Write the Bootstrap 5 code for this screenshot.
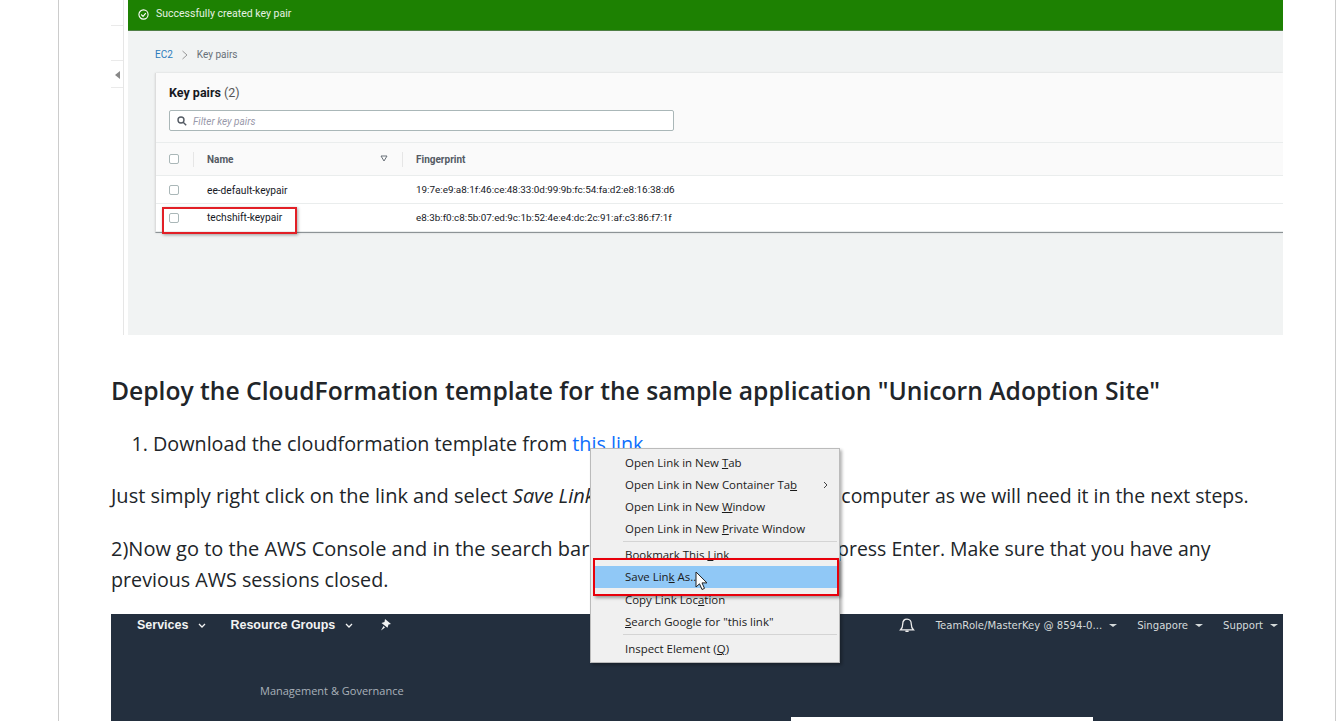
<!DOCTYPE html>
<html lang="en">
<head>
  <meta charset="UTF-8">
  <title>Deploy the CloudFormation template</title>
  <link href="https://cdn.jsdelivr.net/npm/bootstrap@5.3.0/dist/css/bootstrap.min.css" rel="stylesheet">
  <style>
    html, body { height: 721px; overflow: hidden; }
    body { background: #fff; color: #212529; font-family: "Open Sans", sans-serif; }
    .page-frame { position: relative; width: 1278px; height: 721px; margin-left: 58px; padding-left: 52px; padding-right: 52px; border-left: 1px solid #ccc; border-right: 1px solid #ccc; overflow: hidden; }

    /* first screenshot */
    .shot-one { height: 335px; display: flex; overflow: hidden; font-family: Roboto, sans-serif; }
    .side-strip { position: relative; width: 13px; flex: none; border-right: 1px solid #e6e6e6; }
    .side-line { height: 1px; background: #eaeaea; margin-top: 25px; }
    .side-line.second { margin-top: 34px; }
    .side-line.third { margin-top: 26px; }
    .side-arrow { position: absolute; left: 4px; top: 71px; width: 0; height: 0; border-style: solid; border-width: 4px 5px 4px 0; border-color: transparent #888 transparent transparent; }
    .console { flex: 1; margin-left: 4px; background: #f1f3f3; min-width: 0; }
    .flash-bar { height: 31px; background: #1d8102; border-bottom: 1px solid #4f7f45; color: #e6f2e2; font-size: 10.5px; padding-left: 10px; padding-bottom: 2px; gap: 7px; }
    .crumbs { height: 42px; padding-left: 27px; padding-top: 5px; gap: 8px; font-size: 10px; color: #687078; }
    .crumbs a { color: #2c7cbd; text-decoration: none; }
    .keys-panel { position: relative; margin-left: 27px; background: #fafafa; border: 0; border-left: 1px solid #ddd; border-radius: 0; border-bottom: 1px solid #8d9396; height: 160px; box-shadow: 0 0 2px rgba(0,0,0,.12); }
    .keys-title { font-size: 12.5px; font-weight: 700; color: #16191f; padding: 11px 0 0 13px; height: 37px; }
    .keys-title span { font-weight: 400; color: #555; }
    .keys-filter { width: 505px; height: 21px; margin-left: 13px; background: #fff; border: 1px solid #aab7b8; border-radius: 2px; padding-left: 7px; padding-top: 2px; gap: 6px; font-size: 10px; font-style: italic; color: #99a; }
    .keys-head { height: 35px; margin-top: 11px; border-top: 1px solid #eaeded; border-bottom: 1px solid #eaeded; font-size: 10px; font-weight: 700; color: #545b64; }
    .keys-row { height: 28px; background: #fff; border-bottom: 1px solid #eaeded; font-size: 9.9px; color: #16191f; }
    .keys-row:last-child { border-bottom: 0; }
    .tick-cell { width: 37px; flex: none; padding-left: 13px; }
    .tick { display: block; width: 10px; height: 10px; border: 1px solid #aab7b8; border-radius: 2px; background: #fff; }
    .name-cell { width: 209px; flex: none; padding-left: 14px; }
    .keys-row .name-cell { font-size: 10.2px; padding-top: 1px; }
    .print-cell { padding-left: 14px; }
    .keys-row .print-cell { padding-top: 1px; }
    .keys-head .name-cell { position: relative; border-left: 1px solid #e6e6e6; height: 15px; line-height: 15px; padding-left: 13px; }
    .keys-head .print-cell { border-left: 1px solid #e6e6e6; height: 15px; line-height: 15px; padding-left: 13px; }
    .sort-mark { position: absolute; right: 14px; top: 3px; }
    .red-box { position: absolute; left: 6px; top: 134px; width: 135px; height: 27px; border: 2px solid #e21f26; box-shadow: 1px 1px 3px rgba(0,0,0,.35); }

    /* article text */
    .doc-title { font-family: "Open Sans", sans-serif; font-size: 24.65px; font-weight: 600; color: #212529; margin: 40px 0 0; line-height: 32px; }
    .doc-list { font-size: 19.75px; line-height: 31px; margin: 21px 0 0; padding-left: 42px; }
    .doc-list a { color: #0d6efd; text-decoration: none; }
    .doc-para { font-size: 19.7px; line-height: 31px; margin: 21px 0 0; }
    .doc-para + .doc-para { margin-top: 22px; }
    .run-wide { font-size: 20px; }
    .run-tight { font-size: 19.45px; }

    /* second screenshot */
    .shot-two { position: relative; height: 200px; margin-top: 19px; background: #232f3e; font-family: "DejaVu Sans", sans-serif; color: #d5dbdb; }
    .aws-bar { height: 22px; padding: 0 5px 0 26px; font-size: 10.1px; }
    .aws-left { gap: 24px; font-family: "Liberation Sans", sans-serif; font-weight: 700; font-size: 12.5px; color: #f2f3f3; }
    .aws-left .aws-item { gap: 10px; }
    .aws-left .pin-mark { margin-left: 3px; }
    .aws-right { gap: 20px; padding-top: 2px; }
    .aws-right .bell-mark { margin-right: 1px; margin-top: -2px; }
    .aws-item { gap: 7px; }
    .caret-down { display: inline-block; width: 0; height: 0; border-style: solid; border-width: 3px 4px 0 4px; border-color: #d5dbdb transparent transparent transparent; }
    .chev-down { width: 8px; height: 5px; }
    .aws-group { font-family: "Open Sans", sans-serif; font-size: 11px; color: #a9b1ba; padding: 47px 0 0 149px; }
    .aws-white { position: absolute; left: 680px; top: 103px; width: 302px; height: 20px; background: #fff; }

    /* browser context menu */
    .link-menu { position: absolute; left: 531px; top: 448px; width: 250px; height: 215px; margin: 0; padding: 3px 2px; background: #f0f0f0; border: 1px solid #bbb; border-radius: 0; box-shadow: 2px 2px 3px rgba(0,0,0,.3); font-family: "Open Sans", sans-serif; color: #1a1a1a; min-width: 0; }
    .link-menu .dropdown-item { position: relative; height: 22px; line-height: 21px; padding: 0 0 0 32px; color: #1a1a1a; font-size: 11.45px; }
    .link-menu .dropdown-item.picked { background: #90c8f6; margin-bottom: 1px; }
    .link-menu .dropdown-divider { margin: 1px 0 2px 30px; border-top: 1px solid #d4d4d4; opacity: 1; height: 1px; }
    .link-menu .dropdown-divider.lower { margin-bottom: 3px; }
    .sub-arrow { position: absolute; right: 9px; top: 7px; }
    .menu-red { position: absolute; z-index: 1001; left: 534px; top: 558px; width: 246px; height: 38px; border: 2px solid #e8000b; box-shadow: 2px 2px 3px rgba(0,0,0,.35); }
    .mouse-arrow { position: absolute; z-index: 1002; left: 636px; top: 571px; }
  </style>
</head>
<body>
  <div class="page-frame">
    <div class="shot-one">
      <div class="side-strip">
        <div class="side-line"></div>
        <div class="side-line second"></div>
        <div class="side-line third"></div>
        <span class="side-arrow"></span>
      </div>
      <div class="console">
        <div class="flash-bar d-flex align-items-center">
          <svg width="11" height="11" viewBox="0 0 12 12" fill="none" stroke="#fff" stroke-width="1.2"><circle cx="6" cy="6" r="5"/><path d="M3.500 6l2 2 3-3.600"/></svg>
          <span>Successfully created key pair</span>
        </div>
        <div class="crumbs d-flex align-items-center">
          <a href="#">EC2</a>
          <svg width="8" height="10" viewBox="0 0 8 10" fill="none" stroke="#999" stroke-width="1"><path d="M1.500 1l4.500 4-4.500 4"/></svg>
          <span>Key pairs</span>
        </div>
        <div class="card keys-panel">
          <div class="keys-title">Key pairs <span>(2)</span></div>
          <div class="keys-filter d-flex align-items-center">
            <svg width="10" height="10" viewBox="0 0 10 10" fill="none" stroke="#545b64" stroke-width="1.400"><circle cx="4" cy="4" r="3"/><path d="M6.200 6.200L9.200 9.200"/></svg>
            <span>Filter key pairs</span>
          </div>
          <div class="keys-head d-flex align-items-center">
            <div class="tick-cell"><span class="tick"></span></div>
            <div class="name-cell">Name
              <svg class="sort-mark" width="8" height="7" viewBox="0 0 8 7" fill="none" stroke="#687078"><path d="M1 1h6L4 6z"/></svg>
            </div>
            <div class="print-cell">Fingerprint</div>
          </div>
          <div class="keys-row d-flex align-items-center">
            <div class="tick-cell"><span class="tick"></span></div>
            <div class="name-cell">ee-default-keypair</div>
            <div class="print-cell">19:7e:e9:a8:1f:46:ce:48:33:0d:99:9b:fc:54:fa:d2:e8:16:38:d6</div>
          </div>
          <div class="keys-row d-flex align-items-center">
            <div class="tick-cell"><span class="tick"></span></div>
            <div class="name-cell">techshift-keypair</div>
            <div class="print-cell">e8:3b:f0:c8:5b:07:ed:9c:1b:52:4e:e4:dc:2c:91:af:c3:86:f7:1f</div>
          </div>
          <div class="red-box"></div>
        </div>
      </div>
    </div>

    <h4 class="doc-title">Deploy the CloudFormation template for the sample application "Unicorn Adoption Site"</h4>
    <ol class="doc-list">
      <li>Download the cloudformation template from <a href="#">this link</a></li>
    </ol>
    <p class="doc-para"><span class="run-wide">Just simply right click on the link and select <em>Save Link As...</em> and save it onto your</span> <span class="run-tight">computer as we will need it in the next steps.</span></p>
    <p class="doc-para"><span class="run-wide">2)Now go to the AWS Console and in the search bar type CloudFormation and</span> <span class="run-tight">press Enter. Make sure that you have any</span> previous AWS sessions closed.</p>

    <div class="shot-two">
      <div class="aws-bar d-flex align-items-center justify-content-between">
        <div class="aws-left d-flex align-items-center">
          <span class="aws-item d-flex align-items-center">Services
            <svg class="chev-down" viewBox="0 0 8 5" fill="none" stroke="#f2f3f3" stroke-width="1.300"><path d="M1 1l3 3 3-3"/></svg></span>
          <span class="aws-item d-flex align-items-center">Resource Groups
            <svg class="chev-down" viewBox="0 0 8 5" fill="none" stroke="#f2f3f3" stroke-width="1.300"><path d="M1 1l3 3 3-3"/></svg></span>
          <svg class="pin-mark" width="12" height="12" viewBox="0 0 12 12" fill="#f2f3f3"><path d="M5 0l6 5-2.500.6-1 3.200L1.500 4l3-1zM3.500 7L1 11.500 5 8.500z"/></svg>
        </div>
        <div class="aws-right d-flex align-items-center">
          <svg class="bell-mark" width="16" height="16" viewBox="0 0 15 15" fill="none" stroke="#eee" stroke-width="1.200"><path d="M1.500 12h12c-1.500-1.500-2-3-2-5.500 0-2.500-1.500-4.500-4-4.500s-4 2-4 4.500c0 2.500-.5 4-2 5.500zM6 13.500h3"/></svg>
          <span class="aws-item d-flex align-items-center">TeamRole/MasterKey @ 8594-0... <span class="caret-down"></span></span>
          <span class="aws-item d-flex align-items-center">Singapore <span class="caret-down"></span></span>
          <span class="aws-item d-flex align-items-center">Support <span class="caret-down"></span></span>
        </div>
      </div>
      <div class="aws-group">Management &amp; Governance</div>
      <div class="aws-white"></div>
    </div>

    <ul class="dropdown-menu show link-menu">
      <li><a class="dropdown-item" href="#">Open Link in New <u>T</u>ab</a></li>
      <li><a class="dropdown-item" href="#">Open Link in New Container Ta<u>b</u>
        <svg class="sub-arrow" width="5" height="8" viewBox="0 0 5 8" fill="none" stroke="#444"><path d="M1 1l3 3-3 3"/></svg></a></li>
      <li><a class="dropdown-item" href="#">Open Link in New <u>W</u>indow</a></li>
      <li><a class="dropdown-item" href="#">Open Link in New <u>P</u>rivate Window</a></li>
      <li><hr class="dropdown-divider"></li>
      <li><a class="dropdown-item" href="#">Bookmark This <u>L</u>ink</a></li>
      <li><a class="dropdown-item picked" href="#">Save Lin<u>k</u> As...</a></li>
      <li><a class="dropdown-item" href="#">Copy Link Loc<u>a</u>tion</a></li>
      <li><a class="dropdown-item" href="#"><u>S</u>earch Google for "this link"</a></li>
      <li><hr class="dropdown-divider lower"></li>
      <li><a class="dropdown-item" href="#">Inspect Element (<u>Q</u>)</a></li>
    </ul>
    <div class="menu-red"></div>
    <svg class="mouse-arrow" width="14" height="20" viewBox="0 0 14 20"><path d="M1 1v15l3.500-3.200 2.500 5.700 2.500-1.100-2.500-5.500h5z" fill="#fff" stroke="#222" stroke-width="1"/></svg>
  </div>
</body>
</html>
